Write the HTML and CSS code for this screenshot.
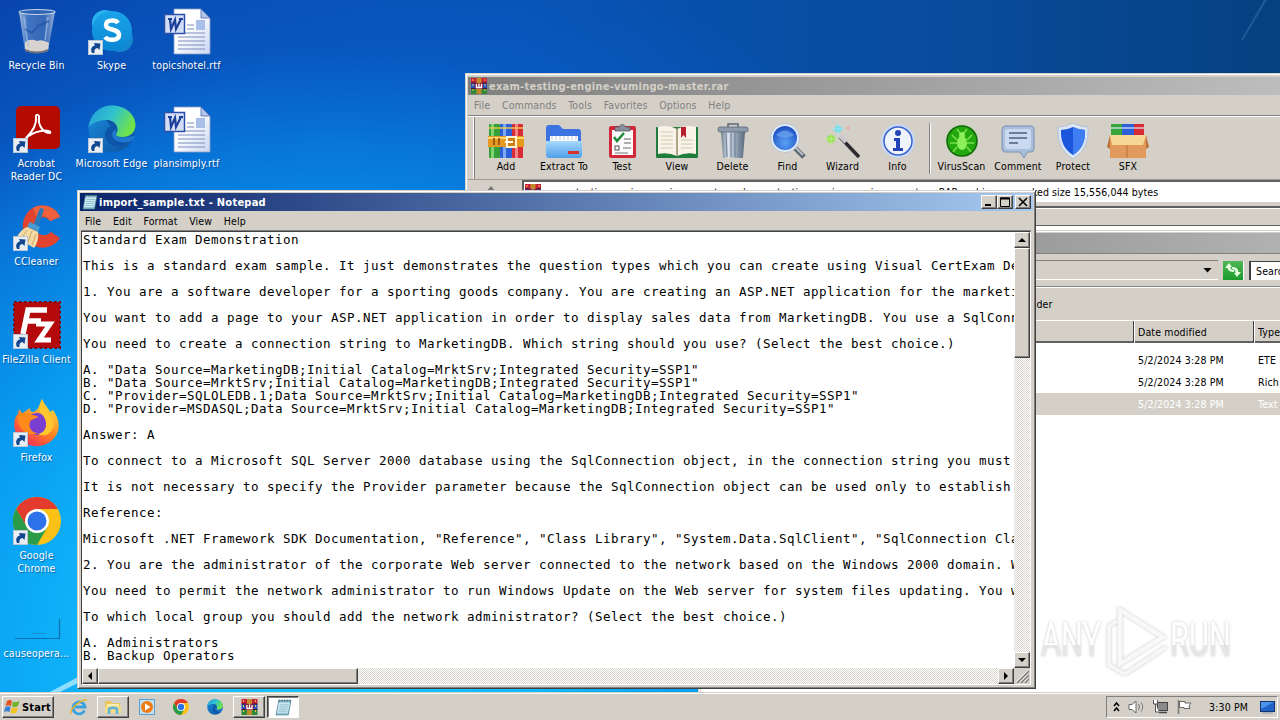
FILE: index.html
```html
<!DOCTYPE html>
<html lang="en">
<head>
    <meta charset="UTF-8">
    <meta name="viewport" content="width=device-width, initial-scale=1.0">
    <title>Desktop</title>
    <link rel="stylesheet" href="styles.css">
</head>
<body>
    <!-- shared icons -->
    <svg class="defs" width="0" height="0">
        <defs>
            <linearGradient id="gEdgeA" x1="0" y1="0" x2="1" y2="0.4"><stop offset="0" stop-color="#2299dc"/><stop offset="0.55" stop-color="#31c3cc"/><stop offset="1" stop-color="#6ee24c"/></linearGradient>
            <linearGradient id="gEdgeB" x1="0" y1="0" x2="1" y2="1"><stop offset="0" stop-color="#1b8fdc"/><stop offset="1" stop-color="#0c4f9e"/></linearGradient>
            <linearGradient id="gSky" x1="0" y1="0" x2="0" y2="1"><stop offset="0" stop-color="#1aa5ea"/><stop offset="1" stop-color="#0b86d2"/></linearGradient>
            <linearGradient id="gPaper" x1="0" y1="0" x2="1" y2="1"><stop offset="0.4" stop-color="#ffffff"/><stop offset="1" stop-color="#c9d6f2"/></linearGradient>
            <linearGradient id="gBin" x1="0" y1="0" x2="1" y2="0"><stop offset="0" stop-color="#b7cce6"/><stop offset="0.25" stop-color="#4b7cc4"/><stop offset="0.7" stop-color="#3b6cb8"/><stop offset="1" stop-color="#a9bfdc"/></linearGradient>
            <linearGradient id="gFox" x1="0.8" y1="0" x2="0.2" y2="1"><stop offset="0" stop-color="#ffe14a"/><stop offset="0.5" stop-color="#ff8a1f"/><stop offset="1" stop-color="#f0245c"/></linearGradient>
            <linearGradient id="gCan" x1="0" y1="0" x2="1" y2="0"><stop offset="0" stop-color="#6d7c8e"/><stop offset="0.3" stop-color="#dfe6ee"/><stop offset="0.6" stop-color="#9aa8b8"/><stop offset="1" stop-color="#5b6a7c"/></linearGradient>
            <linearGradient id="gFold" x1="0" y1="0" x2="0" y2="1"><stop offset="0" stop-color="#a8d8fb"/><stop offset="1" stop-color="#4fa0ea"/></linearGradient>
            <radialGradient id="gLens" cx="0.5" cy="0.7" r="0.7"><stop offset="0" stop-color="#5aa2f5"/><stop offset="1" stop-color="#1a4cc0"/></radialGradient>
            <linearGradient id="gMark" x1="0" y1="0" x2="0" y2="1"><stop offset="0.6" stop-color="#ffffff"/><stop offset="0.6" stop-color="#e6e6e6"/></linearGradient>
        </defs>
        <symbol id="shortcut" viewBox="0 0 15 15">
            <rect x="0.5" y="0.5" width="14" height="14" fill="#e9eef5" stroke="#b9c6d8"/>
            <path d="M4 13C2 9 4 6 7 5.500L6 3L12.500 3.500L11.500 10L9.500 8C7 8.500 6 10 6.500 13Z" fill="#12478f"/>
        </symbol>
        <symbol id="word" viewBox="0 0 48 48">
            <path d="M11 1H38L47 10V46H11Z" fill="url(#gPaper)" stroke="#8c9cc4" stroke-width="0.8"/>
            <path d="M38 1V10H47Z" fill="#b4c4e8" stroke="#4d6cb0" stroke-width="0.8"/>
            <path d="M24 17H31M24 21H31M15 29H42M15 33H42M15 37H42M15 41H42M22 25H42" stroke="#7a8dbb" stroke-width="1"/>
            <rect x="33" y="12" width="9" height="10" fill="#a9bfe8"/>
            <rect x="1.500" y="6.500" width="20" height="19" fill="#d3def6" stroke="#2b4fa8" stroke-width="1.500"/>
            <path d="M5 11H9M7 11L8 21L12 12L13 21L18 11M16 11H20" stroke="#1c3f98" stroke-width="2.200" fill="none"/>
        </symbol>
        <symbol id="edge" viewBox="0 0 48 48">
            <circle cx="24" cy="24" r="23.500" fill="url(#gEdgeB)"/>
            <path d="M0.500 23C2 8 13 0.500 24 0.500C38 0.500 47.500 10 47.500 20C47.500 28 41 32 35 32C30 32 27 31 28 29C31 26 30 16 18 15C8 15 1 21 0.500 23Z" fill="url(#gEdgeA)"/>
            <path d="M18 15C30 15 31 26 28 29C27 32 33 35 46 31C40 46 18 44 17 30C17 25 20 22 23 21Z" fill="#0d55a8"/>
            <path d="M28 29C27 32 33 34 46 31C47 30 47 33 45 35C38 40 25 37 24 30C24 27 26 26 27 24C29 26 28 28 28 29Z" fill="#1f78cd"/>
        </symbol>
        <symbol id="chrome" viewBox="0 0 48 48">
            <circle cx="24" cy="24" r="24" fill="#fbc116"/>
            <path d="M3.200 12A24 24 0 0 1 44.800 12H24L14 30Z" fill="#e33b2e"/>
            <path d="M3.200 12A24 24 0 0 0 24 48L34.500 30L14 30Z" fill="#2a9c48"/>
            <circle cx="24" cy="24" r="12" fill="#fff"/>
            <circle cx="24" cy="24" r="9.500" fill="#2d72ea"/>
        </symbol>
        <symbol id="books" viewBox="0 0 36 36">
            <rect x="1" y="1" width="11" height="34" rx="1" fill="#35a03a"/><rect x="3" y="1" width="3" height="34" fill="#7fd46f"/>
            <rect x="12" y="1" width="12" height="34" rx="1" fill="#2d5fd8"/><rect x="15" y="1" width="3" height="34" fill="#7fa8f5"/>
            <rect x="24" y="1" width="11" height="34" rx="1" fill="#d92b35"/><rect x="27" y="1" width="3" height="34" fill="#f58288"/>
            <path d="M1 5H35" stroke="#e6c94a" stroke-width="1.500"/>
            <rect x="0" y="13" width="36" height="11" fill="#e59a1f"/><path d="M0 15H36" stroke="#ffd873" stroke-width="2"/>
            <path d="M6 15V22M11 15V22" stroke="#9a5a10" stroke-width="2"/>
            <rect x="19" y="14" width="9" height="10" fill="#cf8010" stroke="#fff4cf" stroke-width="2"/><path d="M17 19H25" stroke="#fff" stroke-width="2"/>
        </symbol>
        <symbol id="rar" viewBox="0 0 16 16">
            <rect x="0" y="0" width="16" height="5" fill="#c8203a"/><rect x="0" y="5" width="16" height="5" fill="#2a50c0"/><rect x="0" y="10" width="16" height="6" fill="#2f8a38"/>
            <path d="M0 5H16M0 10.500H16" stroke="#421030" stroke-width="1"/>
            <rect x="5.500" y="0" width="5" height="16" fill="#c38a2c"/>
            <rect x="4" y="5" width="8" height="6" fill="#8e2038"/>
            <path d="M5.500 6V9.500H10.500V6M8 5.500V9" stroke="#fff" stroke-width="1.300" fill="none"/>
            <path d="M2 1V15M14 1V15" stroke="#e8c84a" stroke-width="1" stroke-dasharray="2 3"/>
        </symbol>
        <symbol id="note" viewBox="0 0 16 16">
            <path d="M3.500 1.500H15L12.500 15H1Z" fill="#8ec4d4" stroke="#4c7f90" stroke-width="0.7"/>
            <path d="M3.500 3.500H14L12 13H2Z" fill="#cdeaf2"/>
            <path d="M4.500 5.500H13M4 7.500H12.500M3.700 9.500H12M3.300 11.500H11.700" stroke="#6fa9bb" stroke-width="0.6"/>
            <path d="M4 0.500V2.500M6.500 0.500V2.500M9 0.500V2.500M11.500 0.500V2.500M14 0.500V2.500" stroke="#3d5a66" stroke-width="0.8"/>
        </symbol>
    </svg>

    <div class="desktop">
        <svg class="rays" width="1280" height="720">
            <path d="M46 694L80 676V682L56 694Z" fill="#c8f2ff" opacity="0.7"/>
            <path d="M1241 40L1264 0H1267L1243 40Z" fill="#4a86c4" opacity="0.35"/>
        </svg>
        <div class="icons">
            <div class="icon">
                <svg viewBox="0 0 48 48">
                    <path d="M6 4L12 43Q24 48 35 43L42 4Z" fill="url(#gBin)" opacity="0.85"/>
                    <path d="M12 34Q18 30 24 33Q30 31 36 35L35 43Q24 47 12 43Z" fill="#d8d3ce"/>
                    <path d="M12 41Q24 46 35 41V43Q24 48 12 43Z" fill="#6d6f78"/>
                    <ellipse cx="24" cy="4" rx="18" ry="2.500" fill="#2f63b4" stroke="#c5d4e6" stroke-width="1.200"/>
                    <path d="M11 9L15 38M35 9L32 32" stroke="#a7c3e8" stroke-width="1.500" opacity="0.7"/>
                    <path d="M12 21L19 25L25 18L36 13" stroke="#1f4f9e" stroke-width="2" fill="none" opacity="0.6"/>
                </svg>
                <span>Recycle Bin</span>
            </div>
            <div class="icon">
                <svg viewBox="0 0 48 48">
                    <circle cx="17" cy="15" r="13" fill="#2ab3ee"/><circle cx="32" cy="31" r="13" fill="#1587cf"/><circle cx="24" cy="23" r="20" fill="url(#gSky)"/>
                    <path d="M30 15C28 12 18 11 18 17C18 23 31 20 31 27C31 33 20 33 17 29" stroke="#fff" stroke-width="4.500" fill="none"/>
                    <use href="#shortcut" x="0" y="32" width="15" height="15"/>
                </svg>
                <span>Skype</span>
            </div>
            <div class="icon">
                <svg viewBox="0 0 48 48"><use href="#word" width="48" height="48"/></svg>
                <span>topicshotel.rtf</span>
            </div>

            <div class="icon">
                <svg viewBox="0 0 48 48">
                    <rect x="3" y="0" width="44" height="43" rx="5" fill="#b30b00"/>
                    <path d="M13 32C18 27 24 19 23 11C22 8 27 8 26 12C25 19 30 27 37 27C39 25 33 24 28 25C22 26 16 29 12 33" stroke="#fff" stroke-width="2" fill="none"/>
                    <use href="#shortcut" x="0" y="32" width="15" height="15"/>
                </svg>
                <span>Acrobat<br>Reader DC</span>
            </div>
            <div class="icon">
                <svg viewBox="0 0 48 48"><use href="#edge" y="-1" width="48" height="48"/><use href="#shortcut" x="0" y="32" width="15" height="15"/></svg>
                <span>Microsoft Edge</span>
            </div>
            <div class="icon">
                <svg viewBox="0 0 48 48"><use href="#word" width="48" height="48"/></svg>
                <span>plansimply.rtf</span>
            </div>

            <div class="icon first">
                <svg viewBox="0 0 48 48">
                    <path d="M47 13L37 17C33 10 22 13 22 22C22 31 32 34 38 28L47 34C40 46 22 47 14 36C6 24 10 8 22 3C32 -1 43 4 47 13Z" fill="#e2432f"/>
                    <path d="M47 13L37 17C33 10 26 12 24 15L20 4C32 -2 43 4 47 13Z" fill="#f0603c"/>
                    <path d="M27 4L31 5L25 24L20 22Z" fill="#2a78b8"/>
                    <path d="M17 18L27 23L25 28L14 23Z" fill="#4a9bd4"/>
                    <path d="M14 23L25 28C26 34 24 40 21 44L4 34C4 31 9 25 14 23Z" fill="#f3d9a2"/>
                    <path d="M14 26L8 35M19 27L15 38M23 30L19 41" stroke="#cfa868" stroke-width="1"/>
                    <use href="#shortcut" x="0" y="32" width="15" height="15"/>
                </svg>
                <span>CCleaner</span>
            </div>
            <div class="icon first">
                <svg viewBox="0 0 48 48">
                    <rect x="1" y="0" width="46" height="46" fill="#b40a0c"/>
                    <rect x="1" y="0" width="46" height="46" fill="none" stroke="#7c0608" stroke-width="2" stroke-dasharray="2.500 2.500"/>
                    <path d="M10 32L15 8H34M12 19H28" stroke="#fff" stroke-width="5.500" fill="none"/>
                    <path d="M23 22H37L26 38H38" stroke="#fff" stroke-width="5" fill="none"/>
                    <use href="#shortcut" x="0" y="32" width="15" height="15"/>
                </svg>
                <span>FileZilla Client</span>
            </div>
            <div class="icon first">
                <svg viewBox="0 0 48 48">
                    <path d="M29 -1C31 5 36 8 37 12L40 10C48 21 48 34 37 42C27 49 12 47 5 37C-1 28 1 17 5 14L6 9C8 12 9 13 10 13L17 8C17 11 18 12 20 12C25 11 26 6 29 -1Z" fill="url(#gFox)"/>
                    <circle cx="24" cy="24" r="11" fill="#7a3fd0"/>
                    <path d="M10 13C15 15 22 14 25 17C22 19 18 19 17 22C15 28 19 33 25 33C15 38 4 29 5 17Z" fill="#ff8a1c"/>
                    <path d="M29 -1C31 6 40 13 41 25C38 36 30 37 25 34C36 32 35 18 27 13C25 8 27 4 29 -1Z" fill="#ffc52e"/>
                    <use href="#shortcut" x="0" y="32" width="15" height="15"/>
                </svg>
                <span>Firefox</span>
            </div>
            <div class="icon first">
                <svg viewBox="0 0 48 48"><use href="#chrome" y="-1" width="48" height="48"/><use href="#shortcut" x="0" y="32" width="15" height="15"/></svg>
                <span>Google<br>Chrome</span>
            </div>
            <div class="icon first">
                <svg viewBox="0 0 48 48"><path d="M46.500 23V42.500H2" stroke="#0a6fae" stroke-width="1.200" fill="none"/><path d="M20 37.500H33" stroke="#1a8fd0" stroke-width="1"/></svg>
                <span>causeopera...</span>
            </div>
        </div>

        <!-- archive window -->
        <div class="window winrar">
            <div class="titlebar inactive">
                <svg width="18" height="16"><use href="#rar" width="18" height="16"/></svg>
                <span>exam-testing-engine-vumingo-master.rar</span>
            </div>
            <div class="menubar dim">
                <span>File</span><span>Commands</span><span>Tools</span><span>Favorites</span><span>Options</span><span>Help</span>
            </div>
            <div class="toolbar">
                <div class="tool"><svg viewBox="0 0 36 36"><use href="#books" width="36" height="36"/></svg><span>Add</span></div>
                <div class="tool"><svg viewBox="0 0 36 36">
                    <path d="M0 5Q0 2 3 2H13L17 6H32Q35 6 35 9V30H0Z" fill="#3b74e0"/>
                    <path d="M4 13H32V24H4Z" fill="#fff"/><path d="M6 13V17M10 13V17M14 13V17M18 13V17M22 13V17M26 13V17M30 13V17" stroke="#b7c6de"/>
                    <path d="M0 18H36V32Q36 35 33 35H3Q0 35 0 32Z" fill="url(#gFold)"/><rect x="22" y="28" width="11" height="3" fill="#d8342a"/>
                </svg><span>Extract To</span></div>
                <div class="tool"><svg viewBox="0 0 36 36">
                    <rect x="5" y="3" width="27" height="32" rx="2" fill="#d2293a"/><rect x="8" y="7" width="21" height="25" fill="#fafafa"/>
                    <path d="M11 8V4H15Q18 -1 22 4H26V8Z" fill="#888e99" stroke="#4a4e58" stroke-width="0.7"/>
                    <path d="M10 14L13 18L20 10" stroke="#1f8d38" stroke-width="2.500" fill="none"/><path d="M20 16H27M20 20H27" stroke="#666"/><rect x="11" y="23" width="4" height="4" fill="none" stroke="#555"/><path d="M19 25H27M11 30H24" stroke="#777"/>
                </svg><span>Test</span></div>
                <div class="tool"><svg class="wide" viewBox="0 0 42 36">
                    <rect x="0" y="4" width="42" height="31" rx="1" fill="#1f7c3c"/><path d="M2 4Q12 1 21 6Q30 1 40 4V31Q30 29 21 33Q12 29 2 31Z" fill="#f8f3e6"/>
                    <path d="M21 6V33" stroke="#b0a488" stroke-width="2"/><path d="M5 9H17M5 13H17M5 17H17M5 21H17M5 25H17M25 17H37M25 21H37M25 25H37" stroke="#cfc8b4"/><path d="M25 4H30V15L27.500 12L25 15Z" fill="#b81f30"/>
                </svg><span>View</span></div>
                <div class="tool"><svg viewBox="0 0 36 36">
                    <path d="M6 9H30L28 35H8Z" fill="url(#gCan)"/><path d="M11 10L12 34M16 10V34M20 10V34M25 10L24 34" stroke="#7888a0" stroke-width="1.300"/>
                    <rect x="3" y="4" width="30" height="5" rx="2" fill="#8d9bac" stroke="#5a6878" stroke-width="0.8"/><path d="M13 4V1H23V4" stroke="#5a6878" stroke-width="1.500" fill="none"/>
                </svg><span>Delete</span></div>
                <div class="tool"><svg viewBox="0 0 36 36">
                    <path d="M25 25L34 34" stroke="#5c6673" stroke-width="5"/><path d="M25 24L33 32" stroke="#b9c2cc" stroke-width="2"/>
                    <circle cx="15" cy="15" r="14.500" fill="#dfe9f5" stroke="#a4b5cb" stroke-width="0.6"/><circle cx="15" cy="15" r="12" fill="url(#gLens)"/><path d="M6 12Q15 3 24 12Q15 18 6 12Z" fill="#6fa5f0" opacity="0.7"/>
                </svg><span>Find</span></div>
                <div class="tool"><svg viewBox="0 0 36 36">
                    <path d="M15 14L34 34" stroke="#2b2b2f" stroke-width="3.500"/><path d="M15 13L21 19" stroke="#c9c9cf" stroke-width="4"/>
                    <circle cx="6" cy="16" r="4" fill="#9be05a"/><path d="M6 10V22M0 16H12" stroke="#b9f07a"/>
                    <circle cx="13" cy="6" r="3.500" fill="#6fdcec"/><path d="M13 0V12M7 6H19" stroke="#9ae8f2"/><circle cx="23" cy="5" r="1.500" fill="#f2a4a4"/>
                </svg><span>Wizard</span></div>
                <div class="tool"><svg viewBox="0 0 36 36">
                    <circle cx="18" cy="18" r="17" fill="#c9d8f4"/><circle cx="18" cy="18" r="14" fill="#eef3fc" stroke="#3a62c8" stroke-width="1.500"/>
                    <circle cx="18" cy="10" r="3" fill="#2344b8"/><path d="M14 15H20V25H23V28H13V25H16V18H14Z" fill="#2344b8"/>
                </svg><span>Info</span></div>
                <div class="divider"></div>
                <div class="tool"><svg viewBox="0 0 36 36">
                    <circle cx="18" cy="18" r="16.500" fill="#b9d6ae"/><circle cx="18" cy="18" r="15" fill="#23a80f" stroke="#14660a" stroke-width="1.500"/>
                    <ellipse cx="18" cy="20" rx="5" ry="7" fill="#8cf05a"/><circle cx="18" cy="12" r="3" fill="#8cf05a"/>
                    <path d="M13 17L8 12M23 17L28 12M13 20H6M23 20H30M13 24L9 29M23 24L27 29M16 10L13 6M20 10L23 6" stroke="#7be04b" stroke-width="1.500"/>
                </svg><span>VirusScan</span></div>
                <div class="tool"><svg viewBox="0 0 36 36">
                    <path d="M5 3H31Q34 3 34 7V25Q34 29 31 29H27L24 35L20 29H5Q2 29 2 25V7Q2 3 5 3Z" fill="#a9bfdd" stroke="#7990b2"/><rect x="5" y="6" width="26" height="20" rx="3" fill="#c9daf0"/>
                    <path d="M9 10H27M9 15H27M9 20H18" stroke="#4a5f80" stroke-width="1.700"/>
                </svg><span>Comment</span></div>
                <div class="tool"><svg viewBox="0 0 36 36">
                    <path d="M18 0Q26 4 33 4Q35 26 18 36Q1 26 3 4Q10 4 18 0Z" fill="#dbe6f4" stroke="#9fb3cf" stroke-width="0.7"/><path d="M18 4Q24 7 30 7Q31 24 18 32Q5 24 6 7Q12 7 18 4Z" fill="#1c56dc"/><path d="M18 4Q24 7 30 7Q31 24 18 32Z" fill="#3f7df2"/>
                </svg><span>Protect</span></div>
                <div class="tool"><svg class="wide" viewBox="0 0 42 36">
                    <rect x="4" y="1" width="11" height="14" fill="#37a63a"/><rect x="15" y="1" width="12" height="14" fill="#2d5fd8"/><rect x="27" y="1" width="10" height="14" fill="#d92b35"/><path d="M4 5H37" stroke="#dcebff" stroke-width="2" opacity="0.6"/>
                    <rect x="3" y="13" width="36" height="22" fill="#e09a5c"/><path d="M3 12H39L36 22H5Z" fill="#f7d795"/><path d="M3 12L0 24L3 26ZM39 12L42 24L39 26Z" fill="#b9713c"/><path d="M20 22V35" stroke="#b9713c"/>
                </svg><span>SFX</span></div>
            </div>
            <div class="pathrow">
                <div class="up"><svg width="12" height="12"><path d="M6 0L11 6H1Z" fill="#777"/></svg></div>
                <div class="pathbox">
                    <svg width="16" height="16"><use href="#rar" width="16" height="16"/></svg>
                    <span>exam-testing-engine-vumingo-master.rar\exam-testing-engine-vumingo-master - RAR archive, unpacked size 15,556,044 bytes</span>
                </div>
            </div>
            <div class="listhead"><div></div><div></div></div>
            <div class="listbody"></div>
        </div>

        <!-- explorer window -->
        <div class="window explorer">
            <div class="titlebar inactive"></div>
            <div class="address">
                <div class="crumbs"><svg width="9" height="5"><path d="M0.500 0H8.500L4.500 4.500Z" fill="#000"/></svg></div>
                <div class="refresh"><svg width="18" height="18" viewBox="0 0 18 18"><path d="M1 7L5 2L8 6H6.500Q6.500 9 10 9V11Q4 11 3.500 7ZM17 11L13 16L10 12H11.500Q11.500 8 8 8V6Q14 6 14.500 11Z" fill="#e4ffe0"/></svg></div>
                <div class="search">Search</div>
            </div>
            <div class="commands">New folder</div>
            <div class="filehead"><div></div><div>Date modified</div><div>Type</div></div>
            <div class="files">
                <div class="file"><span></span><span>5/2/2024 3:28 PM</span><span>ETE File</span></div>
                <div class="file"><span></span><span>5/2/2024 3:28 PM</span><span>Rich Text</span></div>
                <div class="file selected"><span></span><span>5/2/2024 3:28 PM</span><span>Text Doc</span></div>
            </div>
        </div>

        <!-- notepad window -->
        <div class="window notepad">
            <div class="titlebar">
                <svg width="16" height="16"><use href="#note" width="16" height="16"/></svg>
                <span>import_sample.txt - Notepad</span>
                <div class="buttons">
                    <div class="btn"><svg width="12" height="10"><path d="M2 8H8" stroke="#000" stroke-width="2"/></svg></div>
                    <div class="btn"><svg width="12" height="10"><path d="M1.500 9.500V1H10.500V9.500Z" stroke="#000" fill="none"/><path d="M1 1.500H11" stroke="#000" stroke-width="2"/></svg></div>
                    <div class="btn close"><svg width="12" height="10"><path d="M2 1L10 9M10 1L2 9" stroke="#000" stroke-width="1.600"/></svg></div>
                </div>
            </div>
            <div class="menubar">
                <span>File</span><span>Edit</span><span>Format</span><span>View</span><span>Help</span>
            </div>
            <div class="editor">
<pre class="text">Standard Exam Demonstration

This is a standard exam sample. It just demonstrates the question types which you can create using Visual CertExam Designer.

1. You are a software developer for a sporting goods company. You are creating an ASP.NET application for the marketing

You want to add a page to your ASP.NET application in order to display sales data from MarketingDB. You use a SqlConnection

You need to create a connection string to MarketingDB. Which string should you use? (Select the best choice.)

A. "Data Source=MarketingDB;Initial Catalog=MrktSrv;Integrated Security=SSP1"
B. "Data Source=MrktSrv;Initial Catalog=MarketingDB;Integrated Security=SSP1"
C. "Provider=SQLOLEDB.1;Data Source=MrktSrv;Initial Catalog=MarketingDB;Integrated Security=SSP1"
D. "Provider=MSDASQL;Data Source=MrktSrv;Initial Catalog=MarketingDB;Integrated Security=SSP1"

Answer: A

To connect to a Microsoft SQL Server 2000 database using the SqlConnection object, in the connection string you must

It is not necessary to specify the Provider parameter because the SqlConnection object can be used only to establish

Reference:

Microsoft .NET Framework SDK Documentation, "Reference", "Class Library", "System.Data.SqlClient", "SqlConnection Class"

2. You are the administrator of the corporate Web server connected to the network based on the Windows 2000 domain. Web

You need to permit the network administrator to run Windows Update on the Web server for system files updating. You want

To which local group you should add the network administrator? (Select the best choice.)

A. Administrators
B. Backup Operators</pre>
                <div class="vscroll">
                    <div class="arrow"><svg width="8" height="4"><path d="M4 0L8 4H0Z"/></svg></div>
                    <div class="thumb"></div>
                    <div class="arrow last"><svg width="8" height="4"><path d="M0 0H8L4 4Z"/></svg></div>
                </div>
                <div class="hscroll">
                    <div class="arrow"><svg width="4" height="8"><path d="M4 0V8L0 4Z"/></svg></div>
                    <div class="thumb"></div>
                    <div class="arrow last"><svg width="4" height="8"><path d="M0 0V8L4 4Z"/></svg></div>
                </div>
                <div class="grip"><svg width="14" height="14"><path d="M2 14L14 2M6 14L14 6M10 14L14 10" stroke="#808080" stroke-width="1.500"/><path d="M1 13L13 1M5 13L13 5M9 13L13 9" stroke="#fff" stroke-width="0.700"/></svg></div>
            </div>
        </div>

        <svg class="watermark" width="200" height="72" viewBox="0 0 200 72">
            <g class="mark">
                <text x="3" y="53" textLength="60" lengthAdjust="spacingAndGlyphs">ANY</text>
                <path d="M79 18L71 23V62L87 71L128 44" fill="none" stroke="#f6f6f6" stroke-width="4"/>
                <path d="M82 7L125 34L82 61Z" fill="none" stroke="#f8f8f8" stroke-width="4.500"/>
                <text x="132" y="53" textLength="61" lengthAdjust="spacingAndGlyphs">RUN</text>
            </g>
        </svg>

        <div class="taskbar">
            <div class="start">
                <svg width="17" height="16" viewBox="0 0 17 16"><path d="M3 2Q6 0 8 2L7 7Q4 5.500 1.500 7Z" fill="#e2531e"/><path d="M9 2.500Q12 4 15.500 2L14 7Q11 9 8 7.500Z" fill="#6eb52c"/><path d="M1.300 8Q4 6.500 6.700 8L5.500 13Q3 11.500 0 13Z" fill="#3b82d8"/><path d="M7.800 8.500Q11 10 13.800 8L12.500 13.500Q9 15.500 6.500 13.500Z" fill="#f5c21c"/></svg>
                <span>Start</span>
            </div>
            <div class="task"><svg width="18" height="18" viewBox="0 0 18 18"><path d="M14.500 12.500A6 6 0 1 1 15 9H5" fill="none" stroke="#3ba2e0" stroke-width="2.800"/><path d="M1 16C-1 11 11 1 17 2" stroke="#e8b62c" stroke-width="1.500" fill="none"/></svg></div>
            <div class="task raised"><svg width="18" height="18" viewBox="0 0 18 18"><path d="M1 3H7L8 5H16V15H1Z" fill="#e9c65e"/><path d="M3 6H15V14H3Z" fill="#fbeeb0"/><path d="M1 8H17V15H1Z" fill="#f4dc86"/><path d="M5 16V11Q9 8.500 13 11V16" stroke="#5fb2dc" stroke-width="2.500" fill="none"/></svg></div>
            <div class="task"><svg width="18" height="18" viewBox="0 0 18 18"><rect x="1.500" y="1.500" width="15" height="15" fill="#c5dff2" stroke="#5a9fd0"/><circle cx="9" cy="9" r="6" fill="#f07c14"/><path d="M7 5.500L12.500 9L7 12.500Z" fill="#fff"/></svg></div>
            <div class="task"><svg width="16" height="16"><use href="#chrome" width="16" height="16"/></svg></div>
            <div class="task"><svg width="16" height="16"><use href="#edge" width="16" height="16"/></svg></div>
            <div class="task raised"><svg width="17" height="16"><use href="#rar" width="17" height="16"/></svg></div>
            <div class="task pressed"><svg width="17" height="17"><use href="#note" width="17" height="17"/></svg></div>
            <div class="tray">
                <svg width="8" height="12"><path d="M1 5L3.500 2L6 5M1 10L3.500 7L6 10" stroke="#000" stroke-width="1.500" fill="none"/></svg>
                <svg width="17" height="16"><path d="M1 5.500H4L8 2V14L4 10.500H1Z" fill="#fff" stroke="#666"/><path d="M10.500 5Q12.500 8 10.500 11M13 3.500Q16.500 8 13 12.500" stroke="#777" fill="none"/></svg>
                <svg width="17" height="16"><rect x="5.500" y="3.500" width="10" height="8" fill="#8a8a8a" stroke="#444"/><path d="M7 13.500H15" stroke="#444" stroke-width="1.500"/><path d="M1.500 1V5H5.500V1M3.500 5V13H7" stroke="#555" fill="#fff"/></svg>
                <svg width="17" height="16"><path d="M2.500 1V15" stroke="#777" stroke-width="1.500"/><path d="M3.500 2.500H9V4H15L13 7L14 9.500H8V8.500H3.500Z" fill="#fff" stroke="#666"/></svg>
                <span>3:30 PM</span>
                <svg width="15" height="13"><rect x="0.500" y="0.500" width="14" height="10" fill="#1f63c8" stroke="#12356c"/><path d="M1 1H14L1 8Z" fill="#4c93ea"/><path d="M2 12H13" stroke="#8899b0" stroke-width="1"/></svg>
            </div>
        </div>
    </div>
</body>
</html>
```
FILE: styles.css
```css
body {
    margin: 0;
    overflow: hidden;
    font-family: "DejaVu Sans Condensed", "DejaVu Sans", sans-serif;
    font-stretch: condensed;
    font-size: 10.5px;
    letter-spacing: 0.15px;
    line-height: 13px;
    color: #000;
}
svg {
    display: block;
    flex: none;
}
.defs {
    position: absolute;
}
.desktop {
    position: relative;
    width: 1280px;
    height: 720px;
    overflow: hidden;
    background: radial-gradient(ellipse 720px 680px at 330px 660px, #1cc8ff 0%, #12b8fc 30%, #089cf0 55%, #0879dc 74%, rgba(8, 94, 200, 0.6) 90%, rgba(8, 80, 180, 0) 108%), linear-gradient(90deg, #0844ac 0%, #0852b4 40%, #084c9c 75%, #064080 100%);
}
.rays {
    position: absolute;
    left: 0;
    top: 0;
}

/* desktop icons */
.icons {
    display: grid;
    grid-template-columns: 75px 75px 75px;
    grid-auto-rows: 98px;
    padding-top: 8px;
    margin-left: -1px;
    width: 225px;
}
.icon {
    display: flex;
    flex-direction: column;
    align-items: center;
    gap: 3px;
    color: #fff;
    text-align: center;
    white-space: nowrap;
    text-shadow: 1px 1px 1px rgba(0, 30, 90, 0.5);
}
.icon.first {
    grid-column: 1;
}
.icon svg {
    width: 48px;
    height: 48px;
    overflow: visible;
}

/* windows */
.window {
    position: absolute;
    box-sizing: border-box;
    display: flex;
    flex-direction: column;
    padding: 2px;
    background: #d4d0c8;
    border: 1px solid;
    border-color: #d4d0c8 #404040 #404040 #d4d0c8;
    box-shadow: inset 1px 1px #fff, inset -1px -1px #808080;
}
.titlebar {
    display: flex;
    align-items: center;
    gap: 1px;
    height: 18px;
    padding-left: 2px;
    background: linear-gradient(90deg, #0a246a, #a6caf0);
    color: #fff;
    font-weight: bold;
    font-size: 11px;
    letter-spacing: 0.25px;
    white-space: nowrap;
}
.titlebar.inactive {
    background: linear-gradient(90deg, #808080, #c0c0c0);
    color: #d4d0c8;
}
.menubar {
    display: flex;
    align-items: center;
    gap: 11.6px;
    height: 20px;
    padding-left: 5px;
}
.menubar.dim {
    padding-left: 6px;
    color: #808080;
}

.winrar {
    left: 465px;
    top: 73px;
    width: 860px;
    height: 400px;
    padding-top: 3px;
}
.toolbar {
    display: grid;
    grid-template-columns: 54px 62px 54px 56px 55px 55px 55px 55px 10px 53px 60px 50px 60px;
    height: 56px;
    padding: 7px 0 0 11px;
    border-top: 1px solid #808080;
    border-bottom: 1px solid #a09c94;
    box-shadow: inset 0 1px #fff, inset 5px 0 #d4d0c8, inset 6px 0 #fff, inset 7px 0 #808080;
}
.tool {
    display: flex;
    flex-direction: column;
    align-items: center;
    gap: 1px;
    white-space: nowrap;
}
.tool svg {
    width: 36px;
    height: 36px;
}
.tool svg.wide {
    width: 42px;
}
.divider {
    width: 1px;
    height: 51px;
    margin-left: 4px;
    background: #808080;
    border-right: 1px solid #fff;
}
.pathrow {
    display: flex;
    height: 22px;
}
.up {
    width: 54px;
    padding: 6px 0 0 17px;
    box-sizing: border-box;
}
.pathbox {
    display: flex;
    align-items: center;
    gap: 5px;
    flex: 1;
    padding-left: 1px;
    background: #fff;
    border-top: 2px solid #606060;
    border-left: 2px solid #606060;
    letter-spacing: 0.08px;
    white-space: nowrap;
}
.listhead {
    display: flex;
    height: 17px;
    margin-top: 4px;
    border-top: 2px solid #606060;
    border-bottom: 1px solid #606060;
}
.listhead div {
    width: 571px;
    border-right: 1px solid #404040;
    box-shadow: inset 1px 1px #fff;
}
.listbody {
    flex: 1;
    background: #fff;
}

.explorer {
    left: 698px;
    top: 230px;
    width: 760px;
    height: 480px;
}
.explorer .titlebar {
    height: 20px;
}
.address {
    display: flex;
    align-items: center;
    gap: 5px;
    height: 34px;
    border-top: 1px solid #808080;
    border-bottom: 1px solid #808080;
    box-sizing: border-box;
}
.crumbs {
    display: flex;
    align-items: center;
    justify-content: flex-end;
    box-sizing: border-box;
    width: 517px;
    height: 20px;
    padding-right: 6px;
    border-top: 1px solid #808080;
    border-bottom: 1px solid #fff;
}
.refresh {
    display: flex;
    align-items: center;
    justify-content: center;
    width: 20px;
    height: 19px;
    background: linear-gradient(#4fb657, #1d9a2c);
    border-right: 1px solid #fff;
}
.search {
    flex: 1;
    height: 18px;
    line-height: 19px;
    padding-left: 5px;
    background: #fff;
    border-left: 2px solid #404040;
    border-top: 1px solid #404040;
}
.commands {
    height: 33px;
    line-height: 33px;
    padding-left: 299px;
    border-top: 1px solid #fff;
    box-sizing: border-box;
}
.filehead, .file {
    display: grid;
    grid-template-columns: 433px 120px 1fr;
}
.filehead {
    height: 20px;
    line-height: 22px;
    border-bottom: 2px solid #606060;
    border-top: 1px solid #fff;
}
.filehead div {
    padding-left: 4px;
    border-right: 1px solid #404040;
    box-shadow: inset 1px 0 #fff;
}
.files {
    flex: 1;
    padding-top: 6px;
    background: #fff;
}
.file {
    height: 22px;
    line-height: 22px;
    white-space: nowrap;
}
.file span {
    padding-left: 4px;
}
.file span:last-child {
    word-spacing: 3px;
}
.file.selected {
    background: #d4d0c8;
    color: #fff;
}

.notepad {
    left: 77px;
    top: 190px;
    width: 959px;
    height: 499px;
}
.buttons {
    display: flex;
    margin-left: auto;
    padding-right: 2px;
}
.btn, .arrow, .thumb, .start, .task.raised {
    box-sizing: border-box;
    background: #d4d0c8;
    border: 1px solid;
    border-color: #fff #404040 #404040 #fff;
    box-shadow: inset -1px -1px #808080;
}
.btn {
    width: 16px;
    height: 14px;
    padding: 1px;
}
.btn.close {
    margin-left: 2px;
}
.editor {
    flex: 1;
    display: grid;
    grid-template-columns: 1fr 16px;
    grid-template-rows: 1fr 16px;
    min-height: 0;
    margin: 0 2px 1px 1px;
    background: #fff;
    border: 1px solid;
    border-color: #404040 #fff #fff #404040;
    box-shadow: 0 -1px #808080;
}
.text {
    margin: 0;
    min-width: 0;
    padding: 1px 0 0 1px;
    overflow: hidden;
    font-family: "DejaVu Sans Mono", monospace;
    font-stretch: normal;
    font-size: 12.5px;
    letter-spacing: 0.475px;
    line-height: 13px;
}
.vscroll, .hscroll {
    display: flex;
    background: repeating-conic-gradient(#fff 0 25%, #d8d5cf 0 50%) 0 0 / 2px 2px;
}
.vscroll {
    flex-direction: column;
}
.arrow {
    display: flex;
    align-items: center;
    justify-content: center;
    width: 16px;
    height: 16px;
}
.arrow.last {
    margin-top: auto;
    margin-left: auto;
}
.vscroll .thumb {
    height: 110px;
}
.hscroll .thumb {
    width: 260px;
}
.grip {
    background: #d4d0c8;
    padding: 1px;
}

.watermark {
    position: absolute;
    left: 1038px;
    top: 603px;
    overflow: visible;
}
.mark {
    filter: drop-shadow(0 0 1.5px rgba(0, 0, 0, 0.22));
}
.mark text {
    font-family: Roboto, sans-serif;
    font-size: 48px;
    letter-spacing: 0;
    font-stretch: normal;
    font-weight: 400;
    fill: url(#gMark);
}

/* taskbar */
.taskbar {
    position: absolute;
    left: 0;
    right: 0;
    bottom: 0;
    box-sizing: border-box;
    display: flex;
    align-items: center;
    height: 28px;
    padding: 1px 2px 0;
    background: #d4d0c8;
    border-top: 1px solid #d4d0c8;
    box-shadow: inset 0 1px #fff;
}
.start {
    display: flex;
    align-items: center;
    gap: 1px;
    width: 52px;
    height: 22px;
    margin-right: 9px;
    padding-left: 1px;
    font-weight: bold;
    font-size: 11px;
}
.task {
    display: flex;
    align-items: center;
    justify-content: center;
    box-sizing: border-box;
    width: 32px;
    height: 22px;
    margin-right: 2px;
}
.task.pressed {
    background: #fff;
    border: 1px solid;
    border-color: #404040 #fff #fff #404040;
    box-shadow: inset 1px 1px #808080;
}
.tray {
    display: flex;
    align-items: center;
    gap: 7px;
    box-sizing: border-box;
    width: 172px;
    height: 22px;
    margin-left: auto;
    padding-left: 6px;
    border: 1px solid;
    border-color: #808080 #fff #fff #808080;
}
.tray span {
    width: 44px;
    margin-left: 9px;
    white-space: nowrap;
}
```
